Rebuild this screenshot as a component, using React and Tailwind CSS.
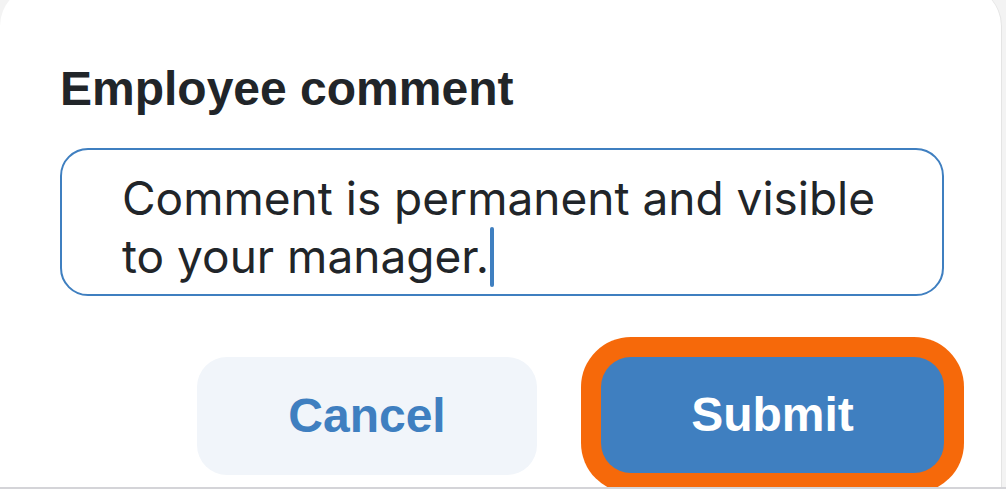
export default function App() {
  return (
    <div className="h-[489px] w-[1006px] overflow-hidden bg-[#f3f3f3] border-b-2 border-[#d4d4d8] flex flex-col">
      {/* ── Card ─────────────────────────────── */}
      <div className="-mt-[14px] w-[1002px] flex-1 rounded-t-[40px] bg-white border-r border-[#e4e4e4] pt-[79px] pl-[60px]">
        <h2 className="text-[48px] leading-[48px] font-bold text-[#212529] font-['Liberation_Sans',Arial,sans-serif]">
          Employee comment
        </h2>

        <div className="mt-[35px] w-[884px] h-[148px] rounded-[28px] border-2 border-[#3f7fc0] pt-[20px] pl-[60px] pr-[40px]">
          <p className="text-[46px] leading-[57px] text-[#212529] font-['Inter',sans-serif]">
            Comment is permanent and visible to your manager.
            <span className="inline-block w-[4px] h-[60px] ml-[1px] rounded-full bg-[#3f7fc0] align-[-14px]" />
          </p>
        </div>

        {/* ── Actions ───────────────────────── */}
        <div className="mt-[61px] w-[884px] flex justify-end gap-[64px]">
          <button className="w-[340px] h-[118px] rounded-[30px] bg-[#f1f5fa] text-[48px] font-bold text-[#3f7fc0] font-['Liberation_Sans',Arial,sans-serif]">
            Cancel
          </button>
          <button className="w-[343px] h-[116px] rounded-[30px] bg-[#3f7fc0] text-[48px] font-bold text-white font-['Liberation_Sans',Arial,sans-serif] shadow-[0_0_0_20px_#f6690a]">
            Submit
          </button>
        </div>
      </div>
    </div>
  );
}
